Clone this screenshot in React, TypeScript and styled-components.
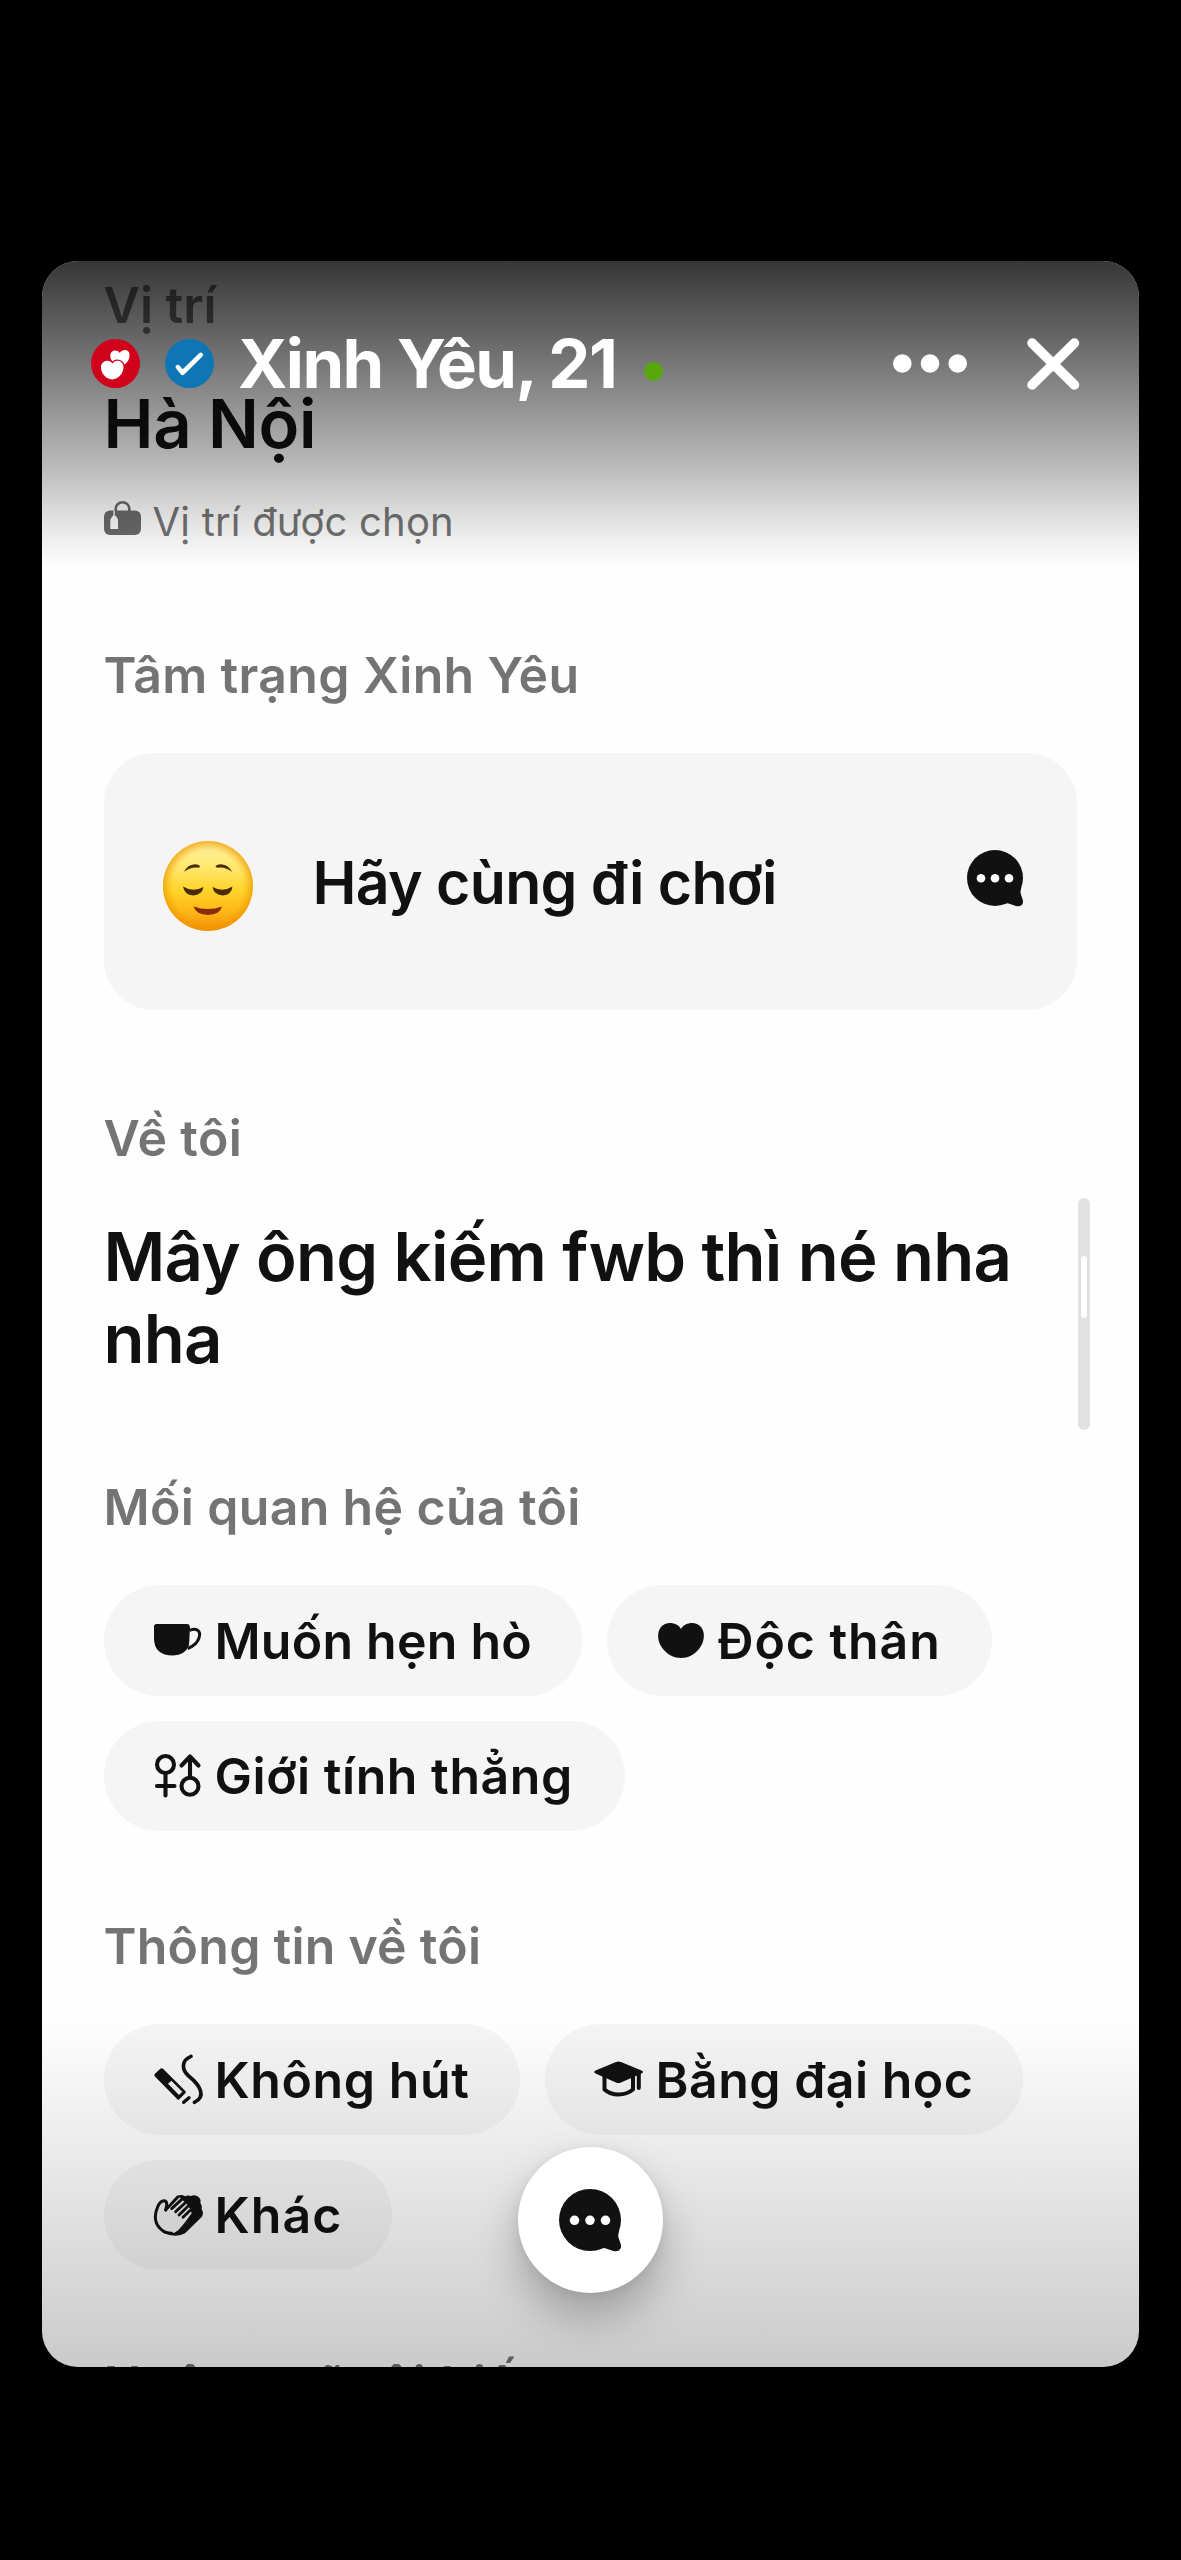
import React from "react";
import styled, { createGlobalStyle } from "styled-components";

const ink = "#111111";
const strong = 640;

const GlobalStyle = createGlobalStyle`
  html, body { margin: 0; padding: 0; background: #000; }
  *, *::before, *::after { box-sizing: border-box; }
  body { font-family: Inter, "Liberation Sans", Arial, sans-serif; color: ${ink}; }
  svg { display: block; flex: none; overflow: visible; }
`;

const Screen = styled.div`
  width: 1181px;
  height: 2560px;
  padding: 261px 42px 193px 41.5px;
  background: #000;
`;

const Sheet = styled.main`
  position: relative;
  height: 2106px;
  overflow: hidden;
  border-radius: 36px;
  background: #fefefe;
`;

const Content = styled.div`
  padding: 13.5px 62px 0 62px;
`;

const Section = styled.section<{ $after: number }>`
  margin-bottom: ${(p) => p.$after}px;
`;

const Heading = styled.h2<{ $track?: number }>`
  margin: 0 0 48px;
  font-size: 50px;
  line-height: 60px;
  font-weight: ${strong};
  letter-spacing: ${(p) => p.$track ?? 0}px;
  color: #747474;
  white-space: nowrap;
`;

const Statement = styled.p<{ $track?: number }>`
  margin: 0;
  font-size: 67px;
  line-height: 82px;
  font-weight: ${strong};
  letter-spacing: ${(p) => p.$track ?? 0}px;
`;

const LocationNote = styled.div`
  display: flex;
  align-items: center;
  gap: 12px;
  margin-top: 32px;
  height: 50px;
  font-size: 40px;
  line-height: 50px;
  color: #747474;
  letter-spacing: 0.2px;

  svg { margin-bottom: 7px; }
`;

const MoodCard = styled.div`
  display: flex;
  align-items: center;
  height: 257px;
  padding: 0 54.5px 0 59px;
  border-radius: 50px;
  background: #f5f5f5;

  > svg { margin-bottom: 6px; }
`;

const MoodFace = styled.div`
  margin-top: 9px;
`;

const MoodText = styled.span`
  flex: 1;
  margin: 3px 0 0 60px;
  font-size: 59px;
  line-height: 72px;
  font-weight: ${strong};
  letter-spacing: -0.72px;
  white-space: nowrap;
`;

const ChipList = styled.div`
  display: flex;
  flex-wrap: wrap;
  gap: 25px;
`;

const Chip = styled.div<{ $width: number }>`
  display: flex;
  align-items: center;
  width: ${(p) => p.$width}px;
  height: 110.5px;
  padding-left: 49px;
  border-radius: 56px;
  background: #f5f5f5;
`;

const ChipIcon = styled.span`
  display: flex;
  align-items: center;
  justify-content: center;
  width: 50px;
  flex: none;
`;

const ChipLabel = styled.span<{ $track: number }>`
  margin: 1px 0 0 12px;
  font-size: 50px;
  line-height: 60px;
  font-weight: ${strong};
  letter-spacing: ${(p) => p.$track}px;
  white-space: nowrap;
`;

const TopBar = styled.header`
  position: absolute;
  inset: 0 0 auto 0;
  height: 308px;
  padding: 62.5px 60.5px 0 49.5px;
  background: linear-gradient(
    rgba(0, 0, 0, 0.79) 0,
    rgba(0, 0, 0, 0.535) 102px,
    rgba(0, 0, 0, 0.44) 139px,
    rgba(0, 0, 0, 0.26) 209px,
    rgba(0, 0, 0, 0.165) 241px,
    rgba(0, 0, 0, 0.05) 282px,
    rgba(0, 0, 0, 0) 308px
  );
`;

const TopRow = styled.div`
  display: flex;
  align-items: center;
  height: 80px;
`;

const Badges = styled.div`
  display: flex;
  gap: 25px;
`;

const Name = styled.h1`
  margin: 0 0 0 24px;
  width: 406px;
  font-size: 67px;
  line-height: 80px;
  font-weight: 700;
  letter-spacing: -1.6px;
  color: #fff;
  white-space: nowrap;
`;

const OnlineDot = styled.span`
  width: 19px;
  height: 19px;
  margin-top: 16px;
  border-radius: 50%;
  background: #58a80d;
`;

const Actions = styled.div`
  display: flex;
  align-items: center;
  gap: 60px;
  margin-left: auto;
`;

const ScrollTrack = styled.div`
  position: absolute;
  top: 937px;
  right: 49px;
  width: 12.5px;
  height: 232px;
  padding: 57.5px 3px 0;
  border-radius: 7px;
  background: #e1e1e1;
`;

const ScrollThumb = styled.div`
  height: 62px;
  border-radius: 4px;
  background: #fff;
`;

const BottomShade = styled.div`
  position: absolute;
  inset: auto 0 0 0;
  height: 348px;
  background: linear-gradient(rgba(0, 0, 0, 0), rgba(0, 0, 0, 0.205));
`;

const ChatButton = styled.button`
  position: absolute;
  left: 476px;
  bottom: 74.5px;
  display: flex;
  align-items: center;
  justify-content: center;
  width: 145px;
  height: 146px;
  padding: 0;
  border: 0;
  border-radius: 50%;
  background: #fff;
  box-shadow: 0 24px 44px rgba(0, 0, 0, 0.25), 0 2px 12px rgba(0, 0, 0, 0.07);
`;

const ChatIcon = ({ size }: { size: number }) => (
  <svg width={size} height={size} viewBox="0 0 56 56">
    <circle cx="28" cy="28" r="28" fill={ink} />
    <path d="M36 54.6Q40 52.4 43 54L49 56C53.5 57.300 57 54.500 55.800 50L53.800 44Q53 41.500 54.400 37.500L40 36Z" fill={ink} />
    <g fill="#fff">
      <circle cx="14" cy="28.300" r="4.300" />
      <circle cx="28" cy="28.300" r="4.300" />
      <circle cx="42" cy="28.300" r="4.300" />
    </g>
  </svg>
);

const LuggageIcon = () => (
  <svg width="37" height="34" viewBox="0 0 37 34">
    <rect y="9.500" width="37" height="24.500" rx="6" fill="#6a6a6a" />
    <path d="M11.700 14V8a6.800 6.800 0 0 1 13.600 0V11" fill="none" stroke="#6a6a6a" strokeWidth="2.600" />
    <path d="M9.400 9.500V14L6.300 18.500V28H14V18.500L11.700 14.500V9.500Z" fill="#fefefe" />
    <path d="M11.900 8V15" stroke="#6a6a6a" strokeWidth="2.200" />
  </svg>
);

const HeartsBadge = () => (
  <svg width="49" height="49" viewBox="33 206 148 148">
    <circle cx="107" cy="280" r="74" fill="#d0021b" />
    <path d="M120 248C111 236 93 239 91 254C91 272 105 288 125 287C144 282 153 263 148 247C142 236 127 238 120 248Z" fill="#fff" />
    <path d="M98 281C91 266 66 270 63 289C62 309 78 327 97 328C116 327 132 309 131 289C129 270 105 266 98 281Z" fill="#fff" stroke="#d0021b" strokeWidth="8" paintOrder="stroke" />
  </svg>
);

const VerifiedBadge = () => (
  <svg width="49" height="49" viewBox="255 206 148 148">
    <circle cx="329" cy="280" r="74" fill="#0f76b5" />
    <path d="M294 291L308 308L363 254" fill="none" stroke="#fff" strokeWidth="14" strokeLinecap="round" strokeLinejoin="round" />
  </svg>
);

const MoreIcon = () => (
  <svg width="74" height="19" viewBox="0 0 74 19" fill="#fff">
    <circle cx="9.300" cy="9.500" r="9.300" />
    <circle cx="37" cy="9.500" r="9.300" />
    <circle cx="64.700" cy="9.500" r="9.300" />
  </svg>
);

const CloseIcon = () => (
  <svg width="52" height="52" viewBox="0 0 52 52">
    <path d="M5 5L47.500 47M47.500 5L5 47" stroke="#fff" strokeWidth="9.500" strokeLinecap="round" />
  </svg>
);

const RelievedFace = () => (
  <svg width="90" height="90" viewBox="0 0 90 90">
    <defs>
      <linearGradient id="skin" x1="0" y1="0" x2="0" y2="1">
        <stop offset="0" stopColor="#fff0a0" />
        <stop offset="0.25" stopColor="#ffea78" />
        <stop offset="0.55" stopColor="#ffd42a" />
        <stop offset="0.8" stopColor="#fdb515" />
        <stop offset="1" stopColor="#f28a08" />
      </linearGradient>
      <radialGradient id="rim" cx="0.5" cy="0.5" r="0.5">
        <stop offset="0.78" stopColor="#f5a300" stopOpacity="0" />
        <stop offset="1" stopColor="#ec9500" stopOpacity="0.7" />
      </radialGradient>
    </defs>
    <circle cx="45" cy="45" r="45" fill="url(#skin)" />
    <circle cx="45" cy="45" r="45" fill="url(#rim)" />
    <g fill="#4a2c08">
      <path d="M21 31Q24 24 32 23.200Q36.500 23.500 37 25.500Q36.500 27 34 26.500Q27 26 21 31Z" />
      <path d="M69 31Q66 24 58 23.200Q53 23.500 52.500 25.500Q53 27 56 26.500Q63 26 69 31Z" />
      <path d="M20 45.500Q30 51.500 40.500 46Q39 54 30 54.500Q21.500 54 20 45.500Z" />
      <path d="M49.500 46Q60 51.500 69.500 45.500Q68.500 54 60 54.500Q51 54 49.500 46Z" />
    </g>
    <path d="M30.500 65.500Q45 70.500 59 65.500Q57 73.500 45 74Q33 73.500 30.500 65.500Z" fill="#8a2a09" />
  </svg>
);

const CupIcon = () => (
  <svg width="48" height="32" viewBox="0 0 48 32">
    <path d="M2.500 0H33Q36 0 36 4L35 21Q31 31.500 19 31.500Q0 31.500 0 14V2.500Q0 0 2.500 0Z" fill={ink} />
    <path d="M35.500 6.500C42 3.500 47.500 6.500 45 14C43 20 39 22.500 33.500 24.500" fill="none" stroke={ink} strokeWidth="3" />
  </svg>
);

const HeartIcon = () => (
  <svg width="46" height="35" viewBox="0 0 46 35">
    <path d="M23 6C19-1 8-2 3 4C-2 10 0 20 5 26C10 32 16 35 23 35C30 35 36 32 41 26C46 20 48 10 43 4C38-2 27-1 23 6Z" fill={ink} />
  </svg>
);

const StraightIcon = () => (
  <svg width="46" height="43" viewBox="0 0 46 43" fill="none" stroke={ink} strokeWidth="4.100" strokeLinecap="round" strokeLinejoin="round">
    <circle cx="10.500" cy="10.500" r="8.500" />
    <path d="M10.500 20V41.500M2 32H19.500" />
    <circle cx="35" cy="32.300" r="8.500" />
    <path d="M35 23V2.500M26.500 11.500L35 2.500L43.500 11.500" />
  </svg>
);

const CigaretteIcon = () => (
  <svg width="50" height="50" viewBox="66 43 150 150">
    <path d="M72 102L88 87Q92 84 96 87L163 154Q166 158 163 161L145 179Q142 182 139 179L71 110Q68 106 72 102Z" fill={ink} />
    <path d="M111 132L121 123L154 156L144 166Z" fill="#f0f0f0" />
    <path d="M158 188L174 174" stroke={ink} strokeWidth="10" strokeLinecap="round" />
    <path d="M180 50C150 62 152 91 173 109C209 138 226 172 190 188" fill="none" stroke={ink} strokeWidth="11" strokeLinecap="round" />
  </svg>
);

const GraduationIcon = () => (
  <svg width="50" height="36" viewBox="0 0 50 36">
    <path d="M22 1Q24.500 0 27 1L47.500 9.500Q50.500 11 47.500 12.500L27 21.500Q24.500 22.500 22 21.500L1.500 12.500Q-1 11 1.500 9.500Z" fill={ink} />
    <path d="M10.500 14V28.500Q16 33.500 24.500 33.500Q33 33.500 39 28.500V14M44.800 12V27" fill="none" stroke={ink} strokeWidth="4" strokeLinecap="round" strokeLinejoin="round" />
  </svg>
);

const HandsIcon = () => (
  <svg width="50" height="42" viewBox="66 462 150 126" strokeLinecap="round" strokeLinejoin="round">
    <path d="M140 467Q152 462 162 469Q170 464 180 468Q192 462 202 470Q211 478 208 488Q214 496 212 508Q219 518 213 530L162 580Q145 590 120 586L95 578L120 500Z" fill={ink} />
    <path d="M104 510C108 496 110 484 100 482C84 481 74 510 73 530C73 558 95 580 122 580C138 578 146 566 158 552L182 520Q176 500 165 490L146 472Z" fill="#efefef" />
    <path d="M104 510C108 496 110 484 100 482C84 481 74 510 73 530C73 558 95 580 122 580" fill="none" stroke={ink} strokeWidth="9" />
    <path d="M104 510L140 471M122 506L158 473M134 515L172 480M144 525L180 490M156 532L184 505" fill="none" stroke={ink} strokeWidth="8.500" />
  </svg>
);

type ChipData = { label: string; width: number; track: number; icon: React.ReactNode };

const relationship: ChipData[] = [
  { label: "Muốn hẹn hò", width: 478, track: 0.25, icon: <CupIcon /> },
  { label: "Độc thân", width: 385, track: 0.9, icon: <HeartIcon /> },
  { label: "Giới tính thẳng", width: 521, track: 0.55, icon: <StraightIcon /> },
];

const about: ChipData[] = [
  { label: "Không hút", width: 416, track: 0.6, icon: <CigaretteIcon /> },
  { label: "Bằng đại học", width: 478.5, track: 0.5, icon: <GraduationIcon /> },
  { label: "Khác", width: 288, track: 1.1, icon: <HandsIcon /> },
];

const Chips = ({ items }: { items: ChipData[] }) => (
  <ChipList>
    {items.map((c) => (
      <Chip key={c.label} $width={c.width}>
        <ChipIcon>{c.icon}</ChipIcon>
        <ChipLabel $track={c.track}>{c.label}</ChipLabel>
      </Chip>
    ))}
  </ChipList>
);

export default function App() {
  return (
    <>
      <GlobalStyle />
      <Screen>
        <Sheet>
          <Content>
            <Section $after={98}>
              <Heading>Vị trí</Heading>
              <Statement $track={-0.3}>Hà Nội</Statement>
              <LocationNote>
                <LuggageIcon />
                <span>Vị trí được chọn</span>
              </LocationNote>
            </Section>
            <Section $after={98.5}>
              <Heading $track={0.35}>Tâm trạng Xinh Yêu</Heading>
              <MoodCard>
                <MoodFace><RelievedFace /></MoodFace>
                <MoodText>Hãy cùng đi chơi</MoodText>
                <ChatIcon size={56} />
              </MoodCard>
            </Section>
            <Section $after={97}>
              <Heading $track={0.4}>Về tôi</Heading>
              <Statement $track={-0.75}>Mây ông kiếm fwb thì né nha nha</Statement>
            </Section>
            <Section $after={85}>
              <Heading $track={0.35}>Mối quan hệ của tôi</Heading>
              <Chips items={relationship} />
            </Section>
            <Section $after={84}>
              <Heading $track={0.25}>Thông tin về tôi</Heading>
              <Chips items={about} />
            </Section>
            <Heading $track={1.1}>Ngôn ngữ tôi biết</Heading>
          </Content>
          <BottomShade />
          <TopBar>
            <TopRow>
              <Badges>
                <HeartsBadge />
                <VerifiedBadge />
              </Badges>
              <Name>Xinh Yêu, 21</Name>
              <OnlineDot />
              <Actions>
                <MoreIcon />
                <CloseIcon />
              </Actions>
            </TopRow>
          </TopBar>
          <ScrollTrack>
            <ScrollThumb />
          </ScrollTrack>
          <ChatButton aria-label="Chat">
            <ChatIcon size={62} />
          </ChatButton>
        </Sheet>
      </Screen>
    </>
  );
}
